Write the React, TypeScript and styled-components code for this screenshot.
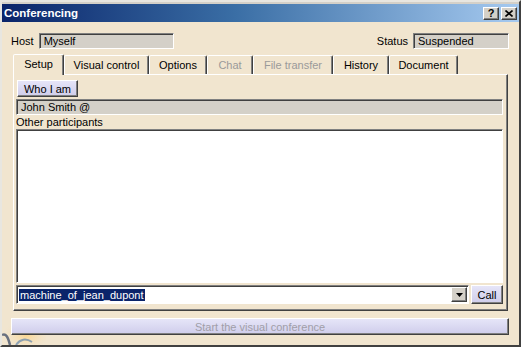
import React from 'react'
import styled, { createGlobalStyle, css } from 'styled-components'

const GlobalStyle = createGlobalStyle`
  html, body {
    margin: 0;
    padding: 0;
    background: #d4d0c8;
  }
  body {
    font-family: "Liberation Sans", Arial, sans-serif;
    font-size: 11px;
    color: #000;
  }
`

const raised = css`
  border-style: solid;
  border-width: 1px;
  border-color: #fff #404040 #404040 #fff;
  box-shadow: inset -1px -1px 0 #808080;
`

const sunken = css`
  border-style: solid;
  border-width: 1px;
  border-color: #808080 #fff #fff #808080;
  box-shadow: inset 1px 1px 0 #404040;
`

const Window = styled.div`
  box-sizing: border-box;
  width: 521px;
  height: 347px;
  display: flex;
  flex-direction: column;
  border-style: solid;
  border-width: 2px;
  border-color: #e8e6e0 #404040 #404040 #e8e6e0;
  padding-top: 2px;
  background: #d4d0c8;
  overflow: hidden;
`

const TitleBar = styled.div`
  height: 18px;
  display: flex;
  align-items: center;
  justify-content: space-between;
  padding: 0 2px 0 2px;
  background: linear-gradient(to right, #0a246a 0%, #3a6ea5 45%, #a6caf0 100%);
`

const Title = styled.span`
  color: #fff;
  font-weight: bold;
  font-size: 11.5px;
`

const Caption = styled.div`
  display: flex;
  gap: 2px;
`

const CaptionButton = styled.div`
  box-sizing: border-box;
  width: 16px;
  height: 13px;
  ${raised};
  background: #d4d0c8;
  display: flex;
  align-items: center;
  justify-content: center;
  font-weight: bold;
  font-size: 11px;
  line-height: 1;
`

const Body = styled.div`
  position: relative;
  flex: 1;
  display: flex;
  flex-direction: column;
  background: #f1e5cf;
  padding: 10px 10px 0 9px;
`

const TopRow = styled.div`
  display: flex;
  align-items: center;
  justify-content: space-between;
  height: 17px;
`

const Group = styled.div`
  display: flex;
  align-items: center;
  gap: 5px;
`

const Field = styled.div<{ $w?: number }>`
  box-sizing: border-box;
  ${sunken};
  background: #d4d0c8;
  height: 16px;
  width: ${p => (p.$w ? `${p.$w}px` : '100%')};
  padding: 0 4px;
  display: flex;
  align-items: center;
  white-space: nowrap;
`

const TabStrip = styled.div`
  display: flex;
  align-items: flex-end;
  height: 21px;
  margin: 4px 0 0 2px;
  position: relative;
  z-index: 1;
`

const Tab = styled.div<{ $w: number; $active?: boolean; $disabled?: boolean }>`
  box-sizing: border-box;
  width: ${p => p.$w}px;
  height: ${p => (p.$active ? 21 : 19)}px;
  margin-bottom: ${p => (p.$active ? -1 : 0)}px;
  background: #f1e5cf;
  border-style: solid;
  border-width: 1px 1px 0 1px;
  border-color: #fff #404040 transparent #fff;
  box-shadow: inset -1px 0 0 #808080;
  border-radius: 2px 2px 0 0;
  display: flex;
  align-items: center;
  justify-content: center;
  color: ${p => (p.$disabled ? '#9a9a9a' : '#000')};
  padding-bottom: ${p => (p.$active ? 2 : 0)}px;
`

const Panel = styled.div`
  box-sizing: border-box;
  height: 237px;
  margin: 0 1px 0 2px;
  border-style: solid;
  border-width: 1px;
  border-color: #fff #404040 #404040 #fff;
  box-shadow: inset -1px -1px 0 #808080;
  padding: 5px 4px 0 2px;
  display: flex;
  flex-direction: column;
`

const Button = styled.div<{ $w?: number; $disabled?: boolean }>`
  box-sizing: border-box;
  ${raised};
  background: linear-gradient(to bottom, #e6e5f8 0%, #cfcdeb 100%);
  width: ${p => (p.$w ? `${p.$w}px` : 'auto')};
  display: flex;
  align-items: center;
  justify-content: center;
  color: ${p => (p.$disabled ? '#a09ea8' : '#000')};
  white-space: nowrap;
`

const WhoButton = styled(Button)`
  height: 17px;
  margin-left: 1px;
`

const WideField = styled(Field)`
  margin-top: 2px;
`

const Label = styled.div`
  height: 14px;
  line-height: 14px;
`

const ListBox = styled.div`
  box-sizing: border-box;
  ${sunken};
  background: #fff;
  height: 154px;
`

const ComboRow = styled.div`
  display: flex;
  gap: 2px;
  margin-top: 2px;
  height: 19px;
`

const Combo = styled.div`
  box-sizing: border-box;
  ${sunken};
  background: #fff;
  flex: 1;
  display: flex;
  align-items: center;
  padding: 2px 1px 2px 2px;
`

const Selected = styled.span`
  background: #0a246a;
  color: #fff;
  padding: 0 1px;
  line-height: 12px;
`

const ComboArrow = styled.div`
  box-sizing: border-box;
  margin-left: auto;
  width: 16px;
  height: 15px;
  ${raised};
  background: #d4d0c8;
  display: flex;
  align-items: center;
  justify-content: center;
`

const CallButton = styled(Button)`
  height: 19px;
`

const StartButton = styled(Button)`
  height: 17px;
  margin: 7px 0 0 0;
  position: relative;
  z-index: 1;
`

const Swirl = styled.svg`
  position: absolute;
  left: 0;
  bottom: 0;
`

const tabs = [
  { label: 'Setup', w: 51, active: true },
  { label: 'Visual control', w: 85 },
  { label: 'Options', w: 58 },
  { label: 'Chat', w: 46, disabled: true },
  { label: 'File transfer', w: 80, disabled: true },
  { label: 'History', w: 56 },
  { label: 'Document', w: 69 },
]

const App: React.FC = () => {
  return (
    <>
      <GlobalStyle />
      <Window>
        <TitleBar>
          <Title>Conferencing</Title>
          <Caption>
            <CaptionButton>?</CaptionButton>
            <CaptionButton>
              <svg width="8" height="7" viewBox="0 0 8 7">
                <path d="M0.5 0.5 L7.5 6.5 M7.5 0.5 L0.5 6.5" stroke="#000" strokeWidth="1.6" />
              </svg>
            </CaptionButton>
          </Caption>
        </TitleBar>

        <Body>
          <Swirl width="44" height="24" viewBox="0 0 44 24">
            <defs>
              <radialGradient id="glow" cx="0.55" cy="0.6" r="0.6">
                <stop offset="0" stopColor="#fbd58a" stopOpacity="0.9" />
                <stop offset="1" stopColor="#f1e5cf" stopOpacity="0" />
              </radialGradient>
            </defs>
            <rect x="0" y="0" width="44" height="24" fill="url(#glow)" />
            <path d="M0 14 C4 12 6 16 8 24" stroke="#3b4a66" strokeWidth="2.5" fill="none" opacity="0.75" />
            <path d="M14 24 C18 18 24 17 30 21" stroke="#4a77a8" strokeWidth="2" fill="none" opacity="0.6" />
          </Swirl>

          <TopRow>
            <Group>
              <span>Host</span>
              <Field $w={135}>Myself</Field>
            </Group>
            <Group>
              <span>Status</span>
              <Field $w={96}>Suspended</Field>
            </Group>
          </TopRow>

          <TabStrip>
            {tabs.map(t => (
              <Tab key={t.label} $w={t.w} $active={t.active} $disabled={t.disabled}>
                {t.label}
              </Tab>
            ))}
          </TabStrip>

          <Panel>
            <WhoButton $w={61}>Who I am</WhoButton>
            <WideField>John Smith @</WideField>
            <Label>Other participants</Label>
            <ListBox />
            <ComboRow>
              <Combo>
                <Selected>machine_of_jean_dupont</Selected>
                <ComboArrow>
                  <svg width="7" height="4" viewBox="0 0 7 4">
                    <path d="M0 0 H7 L3.5 4 Z" fill="#000" />
                  </svg>
                </ComboArrow>
              </Combo>
              <CallButton $w={32}>Call</CallButton>
            </ComboRow>
          </Panel>

          <StartButton $disabled>Start the visual conference</StartButton>
        </Body>
      </Window>
    </>
  )
}

export default App
